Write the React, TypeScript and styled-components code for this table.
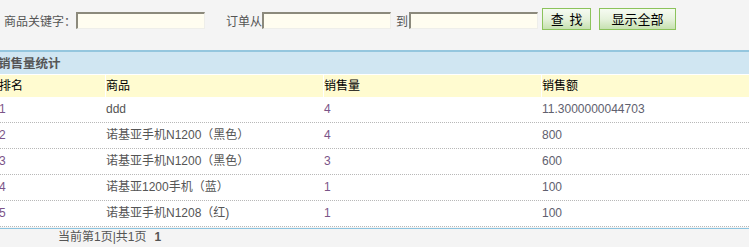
import React from "react";
import styled, { createGlobalStyle } from "styled-components";

const Global = createGlobalStyle`
  html, body { margin: 0; padding: 0; background: #f4f4f4; }
  body { font-family: "Liberation Sans", "Noto Sans CJK SC", sans-serif; font-size: 12px; color: #555; overflow: hidden; }
`;

const Page = styled.div`
  width: 749px;
  height: 247px;
  overflow: hidden;
`;

const Toolbar = styled.div`
  display: flex;
  align-items: center;
  height: 50px;
  padding: 0 0 10px 4px;
  box-sizing: border-box;
`;

const Label = styled.span<{ $gap?: number }>`
  margin-left: ${(p) => p.$gap ?? 0}px;
  color: #555;
  font-size: 12px;
  white-space: nowrap;
`;

const Field = styled.input<{ $ml?: number }>`
  width: 129px;
  height: 17px;
  box-sizing: border-box;
  background: #fffdf0;
  border-style: solid;
  border-width: 2px 1px 1px 2px;
  border-color: #8c8a7c #eeeeea #eeeeea #8c8a7c;
  padding: 0;
  margin: 0 0 0 ${(p) => p.$ml ?? 0}px;
`;

const Btn = styled.button<{ $w: number; $ml: number }>`
  width: ${(p) => p.$w}px;
  height: 22px;
  margin-left: ${(p) => p.$ml}px;
  margin-top: -2px;
  border: 1px solid #8cc35c;
  background: linear-gradient(#f6fbf2, #e6f2dc 50%, #c6e1b0);
  font-family: "Noto Sans CJK SC", sans-serif;
  font-size: 13px;
  color: #000;
  padding: 0;
  line-height: 18px;
  white-space: pre;
`;

const Section = styled.div`
  margin-left: -2px;
`;

const Title = styled.div`
  height: 22px;
  border-top: 2px solid #94c6de;
  border-bottom: 1px solid #fff;
  background: #d0e6f2;
  font-weight: bold;
  font-size: 12.5px;
  color: #555;
  line-height: 22px;
  font-family: "Noto Sans CJK SC", sans-serif;
`;

const Row = styled.div<{ $head?: boolean }>`
  display: grid;
  grid-template-columns: 107px 218px 218px 1fr;
  height: ${(p) => (p.$head ? 22 : 25)}px;
  background: ${(p) => (p.$head ? "#fffbd0" : "#fff")};
  border-bottom: ${(p) => (p.$head ? "none" : "1px dotted #b8b8b8")};
  line-height: ${(p) => (p.$head ? 22 : 25)}px;
`;

const Cell = styled.div<{ $head?: boolean; $tone?: "num" | "name" | "amt"; $first?: boolean }>`
  border-left: ${(p) => (p.$head && !p.$first ? "1px solid #fff" : "none")};
  padding-left: ${(p) => (p.$head && !p.$first ? 0 : 1)}px;
  color: ${(p) =>
    p.$head ? "#000" : p.$tone === "num" ? "#7a5488" : p.$tone === "amt" ? "#60606e" : "#555"};
  white-space: nowrap;
  overflow: hidden;
`;

const Pager = styled.div`
  margin-top: 1px;
  border-top: 1px solid #8cc4e0;
  height: 18px;
  line-height: 17px;
  color: #555;
  padding-left: 58px;
`;

const Strong = styled.b`
  margin-left: 8px;
  color: #555;
`;

const rows = [
  ["1", "ddd", "4", "11.3000000044703"],
  ["2", "诺基亚手机N1200（黑色）", "4", "800"],
  ["3", "诺基亚手机N1200（黑色）", "3", "600"],
  ["4", "诺基亚1200手机（蓝）", "1", "100"],
  ["5", "诺基亚手机N1208（红)", "1", "100"],
];

export default function App() {
  return (
    <Page>
      <Global />
      <Toolbar>
        <Label>商品关键字：</Label>
        <Field />
        <Label $gap={21}>订单从</Label>
        <Field />
        <Label $gap={5}>到</Label>
        <Field $ml={1} />
        <Btn $w={49} $ml={4}>{"查  找"}</Btn>
        <Btn $w={77} $ml={8}>显示全部</Btn>
      </Toolbar>
      <Section>
        <Title>销售量统计</Title>
        <Row $head>
          <Cell $head $first>排名</Cell>
          <Cell $head>商品</Cell>
          <Cell $head>销售量</Cell>
          <Cell $head>销售额</Cell>
        </Row>
        {rows.map((r) => (
          <Row key={r[0]}>
            <Cell $tone="num">{r[0]}</Cell>
            <Cell $tone="name">{r[1]}</Cell>
            <Cell $tone="num">{r[2]}</Cell>
            <Cell $tone="amt">{r[3]}</Cell>
          </Row>
        ))}
      </Section>
      <Pager>
        当前第1页|共1页<Strong>1</Strong>
      </Pager>
    </Page>
  );
}
